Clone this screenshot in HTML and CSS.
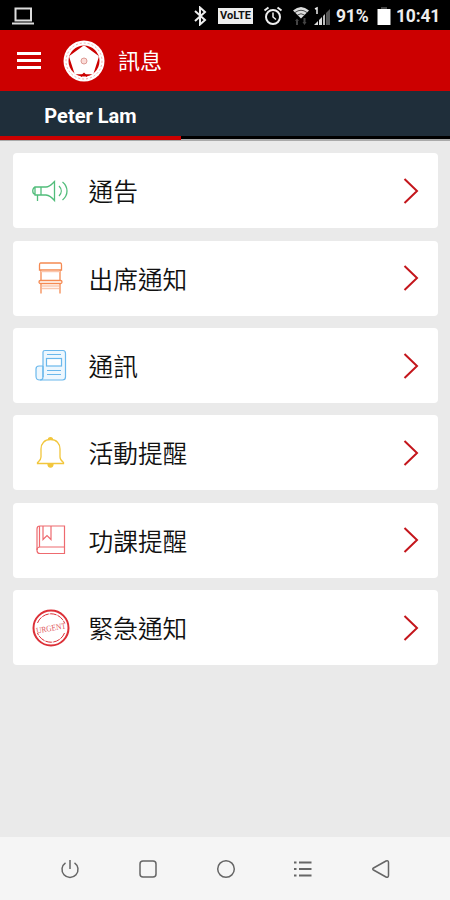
FILE: index.html
```
<!DOCTYPE html>
<html lang="zh-Hant">
<head>
    <meta charset="UTF-8">
    <meta name="viewport" content="width=device-width, initial-scale=1.0">
    <title>訊息</title>
    <link rel="stylesheet" href="styles.css">
</head>
<body>

    <!-- Status Bar -->
    <div class="status-bar">
        <svg class="laptop" width="22" height="18" viewBox="0 0 22 18" fill="none" stroke="#ddd" stroke-width="2">
            <rect x="3.500" y="1.500" width="15.500" height="12"/>
            <path d="M0 16.500h22"/>
        </svg>
        <svg class="bluetooth" width="14" height="20" viewBox="0 0 14 20" fill="none" stroke="#eee" stroke-width="2">
            <path d="M2 5l10 9-5 4.500V1.500L12 6 2 15"/>
        </svg>
        <span class="volte">VoLTE</span>
        <svg class="alarm" width="20" height="20" viewBox="0 0 20 20" fill="none" stroke="#eee" stroke-width="2">
            <circle cx="10" cy="11" r="7"/>
            <path d="M1.500 4.500L5.500 1.500M18.500 4.500l-4-3"/>
            <path d="M10 6.500V11l3 2.500" stroke-width="1.500"/>
        </svg>
        <svg class="wifi" width="18" height="20" viewBox="0 0 18 20">
            <path d="M1 4.500Q9-2.500 17 4.500L9 12.500z" fill="#ddd"/>
            <path d="M3 6.500Q9 2 15 6.500M5.500 9Q9 6.500 12.500 9" fill="none" stroke="#222" stroke-width="0.800"/>
            <path d="M3 15l2-2.500L7 15H6v4H4v-4zM10.500 16l2 3 2-3h-1v-4h-2v4z" fill="#444"/>
        </svg>
        <svg class="signal" width="17" height="20" viewBox="0 0 17 20">
            <path d="M0 19l4-4v4zM5 14l3-3v8H5z" fill="#ddd"/>
            <path d="M9 10l2-2v11H9z" fill="#bbb"/>
            <path d="M12 7l4-4v16h-4z" fill="#555"/>
            <path d="M1 3l2-1v6" fill="none" stroke="#eee" stroke-width="1.500"/>
        </svg>
        <span class="battery-text">91%</span>
        <svg class="battery" width="14" height="20" viewBox="0 0 14 20">
            <path d="M4 1h6v2H4z" fill="#444"/>
            <path d="M0.500 3h13v16h-13z" fill="#fff"/>
        </svg>
        <span class="clock">10:41</span>
    </div>

    <!-- Header -->
    <header class="header">
        <div class="menu-btn"><span></span><span></span><span></span></div>
        <svg class="logo" width="42" height="42" viewBox="0 0 42 42">
            <circle cx="21" cy="21" r="20.500" fill="#fff"/>
            <circle cx="21" cy="21" r="15.500" fill="#c00"/>
            <path d="M21 7.500l13 9.500-5 15.500H13L8 17z" fill="#fff" stroke="#fff" stroke-width="3.500" stroke-linejoin="round"/>
            <path d="M18 36.500l3-3 3 3" fill="none" stroke="#c00" stroke-width="1.500"/>
            <circle cx="21" cy="21" r="18" fill="none" stroke="#e88" stroke-width="0.700" stroke-dasharray="2 2"/>
            <circle cx="21" cy="21" r="3" fill="#fbdcd8" stroke="#dc9a94" stroke-width="1"/>
        </svg>
        <h1>訊息</h1>
    </header>

    <!-- Tabs -->
    <nav class="tabs">
        <div class="tab active">Peter Lam</div>
    </nav>

    <!-- Message List -->
    <main class="list">
        <a class="card">
            <svg class="icon" width="40" height="40" viewBox="0 0 40 40" fill="none" stroke="#52bd7b" stroke-width="1.300">
                <path d="M4 16h11c4 0 6-3 8.500-5.500v19c-2.500-3-4.500-5-8.500-5.500H4z"/>
                <path d="M4 16.500c-3 0-3 6.500 0 6.500M10 16v8M6.500 24v6"/>
                <path d="M28 15c3 3 3 7 0 10M31.500 11c6 5 6 13 0 18"/>
            </svg>
            <span class="label">通告</span>
            <svg class="arrow" width="16" height="28" viewBox="0 0 16 28"><path d="M1.500 2L14 14 1.500 26"/></svg>
        </a>
        <a class="card">
            <svg class="icon" width="40" height="40" viewBox="0 0 40 40" fill="none" stroke="#f58a52" stroke-width="1.300">
                <path d="M9.500 5h20c1 0 1 1 1 2v5h-22V7c0-1 0-2 1-2z"/>
                <path d="M10 12v11M29 12v11M10 25.500v10M29 25.500v10"/>
                <rect x="8" y="22.500" width="23" height="3" rx="1.500"/>
                <path d="M10 13.500h19M11 28h17M11 30.500h17" stroke="#fac8af"/>
            </svg>
            <span class="label">出席通知</span>
            <svg class="arrow" width="16" height="28" viewBox="0 0 16 28"><path d="M1.500 2L14 14 1.500 26"/></svg>
        </a>
        <a class="card">
            <svg class="icon" width="40" height="40" viewBox="0 0 40 40" fill="none" stroke="#6ab8ec" stroke-width="1.200">
                <path d="M12 31V6c0-1 1-1.500 2-1.500h18c2 0 2.500 1 2.500 3V31c0 2-1 3-3 3H9c-3 0-4-1-4-4v-7c0-2 1-3 3-3h4z" fill="#edf7fe"/>
                <path d="M12 20v11c0 2-1 3-3 3"/>
                <rect x="15.500" y="12.500" width="15" height="7.500" fill="#fff"/>
                <path d="M16 8.500h14M16 24.500h14M16 28.500h14"/>
            </svg>
            <span class="label">通訊</span>
            <svg class="arrow" width="16" height="28" viewBox="0 0 16 28"><path d="M1.500 2L14 14 1.500 26"/></svg>
        </a>
        <a class="card">
            <svg class="icon" width="40" height="40" viewBox="0 0 40 40" fill="none" stroke="#f2c63c" stroke-width="1.300">
                <path d="M19.500 6.500c-6 0-9.500 4-9.500 9.500v8c0 3-2 4-3.500 5.500v1h26v-1c-2-1.500-3.500-2.500-3.500-5.500v-8c0-5.500-3.500-9.500-9.500-9.500z"/>
                <path d="M17.500 6.500c0-2.500 4-2.500 4 0M17 31c0 4 5 4 5 0z" fill="#f2c63c"/>
            </svg>
            <span class="label">活動提醒</span>
            <svg class="arrow" width="16" height="28" viewBox="0 0 16 28"><path d="M1.500 2L14 14 1.500 26"/></svg>
        </a>
        <a class="card">
            <svg class="icon" width="40" height="40" viewBox="0 0 40 40" fill="none" stroke="#ee6a6f" stroke-width="1.200">
                <path d="M9 6h24.500v27.500H9c-2 0-3-1-3-3V9c0-2 1-3 3-3z"/>
                <path d="M6 30c0-2 1-3 3-3h24.500M8.500 6v21"/>
                <path d="M12 6v13.500l4-4 4 4V6"/>
            </svg>
            <span class="label">功課提醒</span>
            <svg class="arrow" width="16" height="28" viewBox="0 0 16 28"><path d="M1.500 2L14 14 1.500 26"/></svg>
        </a>
        <a class="card">
            <svg class="icon" width="40" height="40" viewBox="0 0 40 40" fill="none" stroke="#dc3038">
                <circle cx="20" cy="20" r="17.500" stroke-width="2"/>
                <path d="M6.500 15a14.500 14.500 0 0 1 27 0M33.500 25a14.500 14.500 0 0 1-27 0" stroke-width="1" stroke-dasharray="7 1"/>
                <text class="stamp" x="20" y="23" text-anchor="middle" textLength="30" lengthAdjust="spacingAndGlyphs" transform="rotate(-10 20 20)">URGENT</text>
            </svg>
            <span class="label">緊急通知</span>
            <svg class="arrow" width="16" height="28" viewBox="0 0 16 28"><path d="M1.500 2L14 14 1.500 26"/></svg>
        </a>
    </main>

    <!-- Android Navigation -->
    <footer class="nav-bar">
        <svg width="20" height="20" viewBox="0 0 20 20"><path d="M5.500 3.800a8 8 0 1 0 9 0M10 1v9"/></svg>
        <svg width="20" height="20" viewBox="0 0 20 20"><rect x="2" y="2" width="16" height="16" rx="3"/></svg>
        <svg width="20" height="20" viewBox="0 0 20 20"><circle cx="10" cy="10" r="8.300"/></svg>
        <svg width="20" height="20" viewBox="0 0 20 20"><path d="M1 3.500h2.500M6 3.500h12.500M1 10h2.500M6 10h12.500M1 16.500h2.500M6 16.500h12.500" stroke-width="1.800"/></svg>
        <svg width="20" height="20" viewBox="0 0 20 20"><path d="M2.500 9L15 2c1.500-.8 2.500 0 2.500 1.500v13c0 1.500-1 2.300-2.500 1.500L2.500 11c-1-.6-1-1.400 0-2z"/></svg>
    </footer>

</body>
</html>
```
FILE: styles.css
```
* { box-sizing: border-box; }

body {
    margin: 0;
    height: 900px;
    display: flex;
    flex-direction: column;
    background: #eaeaea;
    font-family: Roboto, "Noto Sans CJK TC", sans-serif;
    color: #111;
}
svg { display: block; flex-shrink: 0; }

/* Status Bar */
.status-bar {
    height: 30px;
    padding: 1px 10px 0 12px;
    display: flex;
    align-items: center;
    background: #000;
    color: #eee;
    font-size: 17.500px;
    font-weight: bold;
}
.laptop { margin-right: auto; }
.volte {
    width: 35px;
    height: 16px;
    margin: 0 10px 0 11px;
    background: #eee;
    color: #111;
    font-size: 11px;
    line-height: 16px;
    text-align: center;
}
.wifi { margin-left: 9px; }
.signal { margin: 0 5px 0 4px; }
.battery-text { width: 34px; letter-spacing: -0.200px; }
.battery { margin: 0 5px 0 7px; }
.clock { width: 44px; white-space: nowrap; letter-spacing: -0.200px; }

/* Header */
.header {
    height: 61px;
    padding-left: 17px;
    display: flex;
    align-items: center;
    background: #c00;
    color: #fff;
}
.menu-btn {
    width: 24px;
    display: flex;
    flex-direction: column;
    gap: 4px;
}
.menu-btn span { height: 3px; background: #fff; }
.logo { margin: 0 13px 0 22px; }
h1 {
    margin: 0;
    padding-bottom: 3px;
    font-size: 22px;
    font-weight: 400;
}

/* Tabs */
.tabs {
    height: 50px;
    display: flex;
    background: linear-gradient(#1f2e3a 45px, #000 45px, #000 48.500px, #aaa 48.500px);
    color: #fff;
}
.tab {
    width: 181px;
    height: 48.500px;
    line-height: 51px;
    text-align: center;
    font-size: 20px;
    font-weight: bold;
}
.tab.active { border-bottom: 4px solid #c00; }

/* Message List */
.list {
    flex: 1;
    padding: 12.300px 12px 0 12.500px;
    display: flex;
    flex-direction: column;
    gap: 12.400px;
}
.card {
    height: 75px;
    padding: 0 19px 0 18px;
    display: flex;
    align-items: center;
    background: #fff;
    border-radius: 4px;
}
.label {
    flex: 1;
    margin-left: 18px;
    padding-bottom: 1px;
    font-size: 24.700px;
    font-weight: 350;
}
.arrow {
    fill: none;
    stroke: #c4161c;
    stroke-width: 2;
}
.stamp {
    fill: #e0555b;
    stroke: none;
    font-family: "Liberation Serif", serif;
    font-size: 8.500px;
}

/* Android Navigation */
.nav-bar {
    height: 63px;
    padding: 1px 59px 0 60px;
    display: flex;
    align-items: center;
    justify-content: space-between;
    background: #f5f5f5;
}
.nav-bar svg {
    fill: none;
    stroke: #666;
    stroke-width: 1.500;
}
```
